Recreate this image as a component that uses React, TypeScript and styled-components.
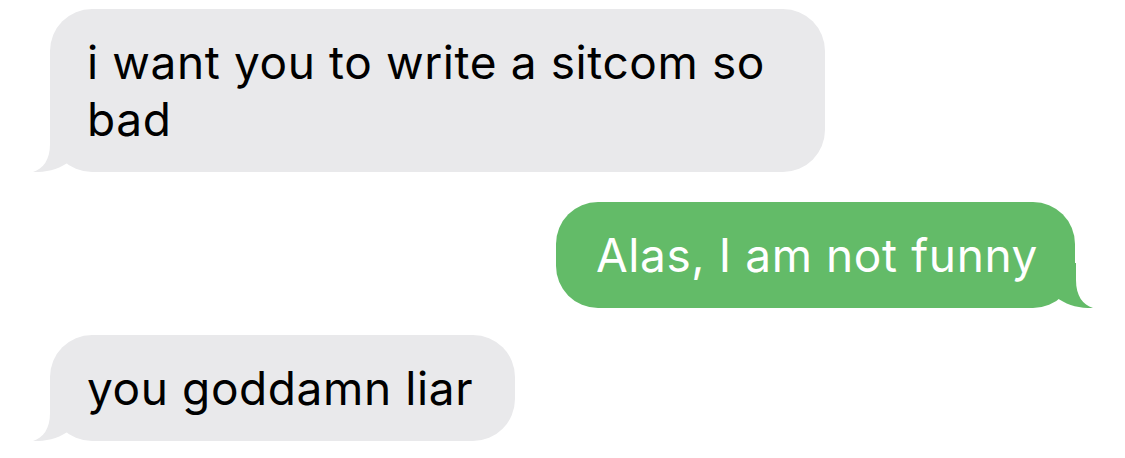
import styled, { createGlobalStyle } from "styled-components";

const COLORS = {
  GRAY: "#e9e9eb",
  GREEN: "#63bb68",
  TEXT: "#000000",
  WHITE: "#ffffff",
};

const GlobalStyle = createGlobalStyle`
  html, body {
    margin: 0;
    padding: 0;
    background: ${COLORS.WHITE};
  }
  body {
    font-family: Inter, "Noto Sans", "Liberation Sans", sans-serif;
    -webkit-font-smoothing: antialiased;
  }
`;

const Thread = styled.div`
  width: 1125px;
  height: 458px;
  box-sizing: border-box;
  padding: 9px 50px 0;
  display: flex;
  flex-direction: column;
  overflow: hidden;
`;

const Row = styled.div<{ $mine?: boolean; $space: number }>`
  display: flex;
  justify-content: ${({ $mine }) => ($mine ? "flex-end" : "flex-start")};
  margin-top: ${({ $space }) => $space}px;
`;

const Bubble = styled.div<{ $mine?: boolean }>`
  position: relative;
  box-sizing: border-box;
  max-width: 775px;
  padding: ${({ $mine }) => ($mine ? "25px 37px 24px 40px" : "25px 42px 24px 37px")};
  border-radius: 42px;
  background: ${({ $mine }) => ($mine ? COLORS.GREEN : COLORS.GRAY)};
  color: ${({ $mine }) => ($mine ? COLORS.WHITE : COLORS.TEXT)};
  font-size: 46px;
  line-height: 57px;
  letter-spacing: 0.6px;
`;

const Tail = styled.svg<{ $mine?: boolean }>`
  position: absolute;
  bottom: 0;
  width: 62px;
  height: 45px;
  ${({ $mine }) => ($mine ? "right: -18px; transform: scaleX(-1);" : "left: -17px;")}
`;

const BubbleTail = ({ mine }: { mine?: boolean }) => (
  <Tail $mine={mine} viewBox="0 0 62 45">
    <path
      d="M17 0 L17 17 C17 33 10 42 0 45 C14 45.5 27 42 37 34 L37 0 Z"
      fill={mine ? COLORS.GREEN : COLORS.GRAY}
    />
  </Tail>
);

const Message = ({ text, mine, space }: { text: string; mine?: boolean; space: number }) => (
  <Row $mine={mine} $space={space}>
    <Bubble $mine={mine}>
      {text}
      <BubbleTail mine={mine} />
    </Bubble>
  </Row>
);

const App = () => {
  return (
    <>
      <GlobalStyle />
      <Thread>
        <Message space={0} text="i want you to write a sitcom so bad" />
        <Message space={30} mine text="Alas, I am not funny" />
        <Message space={27} text="you goddamn liar" />
      </Thread>
    </>
  );
};

export default App;
